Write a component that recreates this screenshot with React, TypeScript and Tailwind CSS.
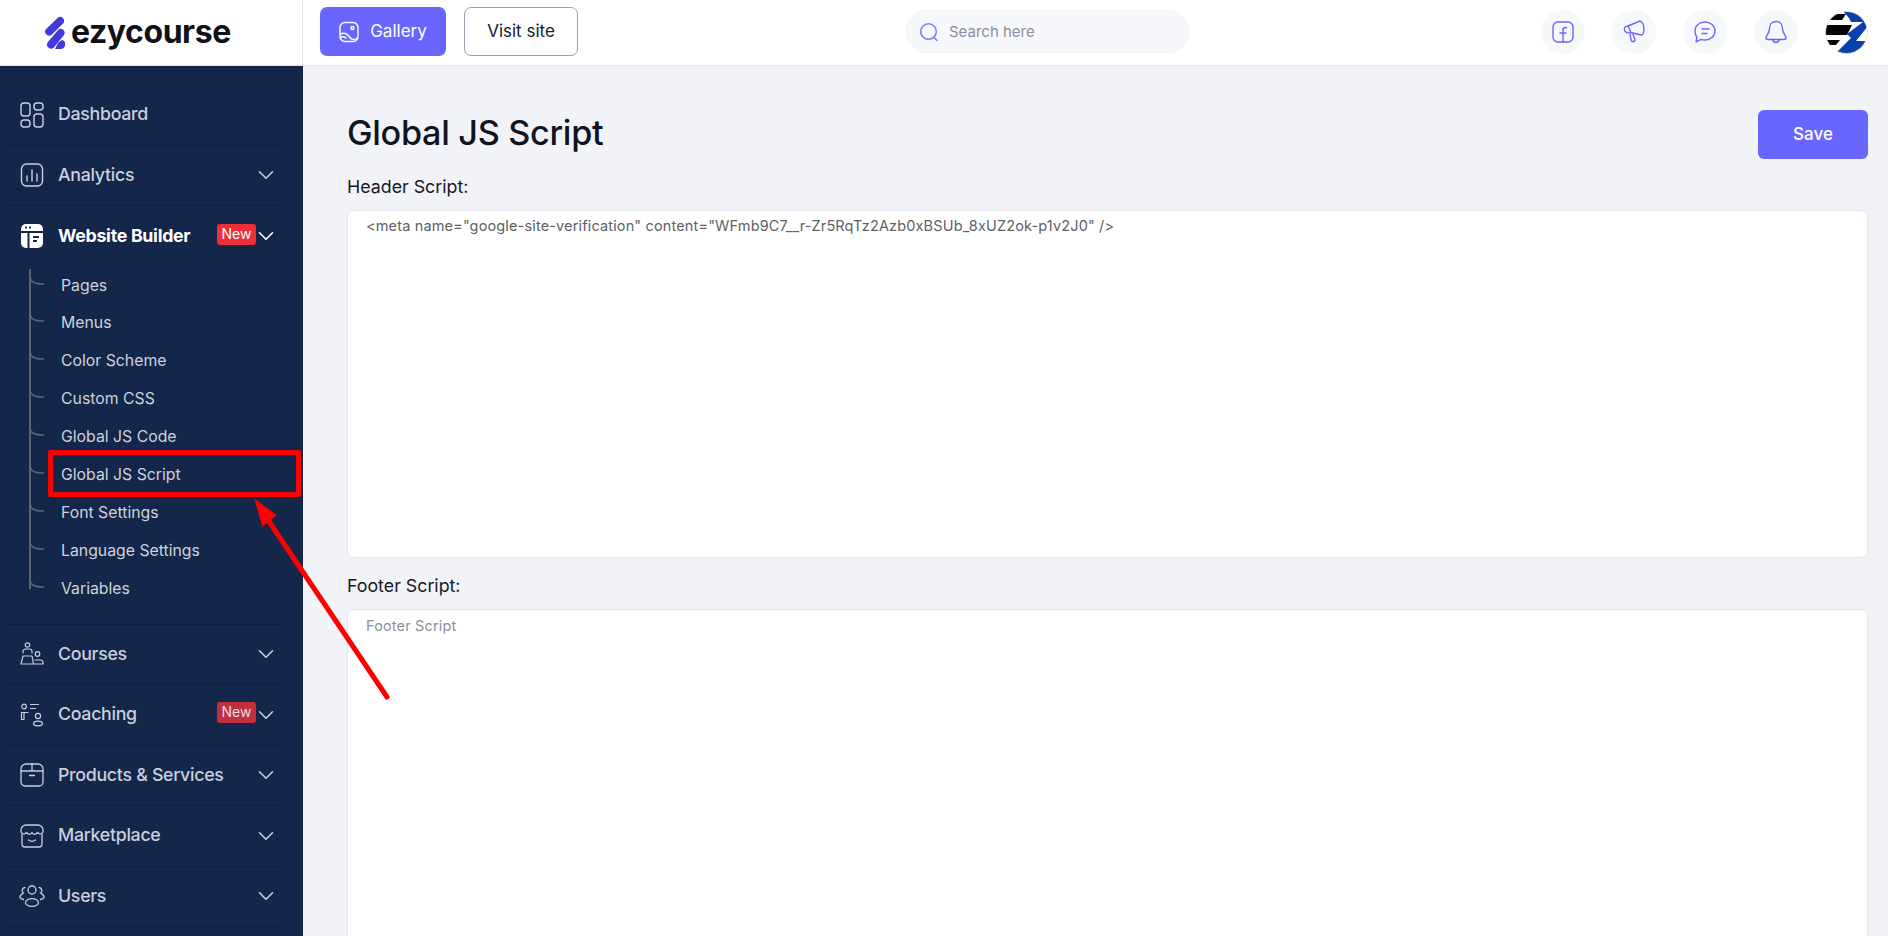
import React from 'react';
import { ChevronDown } from 'lucide-react';

const font = "font-['Inter','Liberation_Sans',sans-serif]";

// sidebar icons, hand drawn because the packages have no close match
const IconDashboard = () => (
  <svg width="24" height="26" viewBox="0 0 24 26" fill="none" stroke="currentColor" strokeWidth="1.4">
    <rect x="1" y="1" width="9" height="13" rx="3" />
    <rect x="14" y="1" width="9" height="7" rx="3" />
    <rect x="1" y="18" width="9" height="7" rx="3" />
    <rect x="14" y="12" width="9" height="13" rx="3" />
  </svg>
);
const IconAnalytics = () => (
  <svg width="24" height="26" viewBox="0 0 24 26" fill="none" stroke="currentColor" strokeWidth="1.4" strokeLinecap="round">
    <rect x="1.5" y="2" width="21" height="22" rx="5" />
    <path d="M7 14v5M12 8v11M17 12v7" />
  </svg>
);
const IconBuilder = () => (
  <svg width="24" height="26" viewBox="0 0 24 26" fill="#fff">
    <path d="M6 1h12a5 5 0 0 1 5 5v2H1V6a5 5 0 0 1 5-5z" />
    <path d="M1 10h6.5v15H6a5 5 0 0 1-5-5z" />
    <path d="M9.5 10H23v10a5 5 0 0 1-5 5H9.5z" />
    <circle cx="6" cy="4.6" r="1.1" fill="#142649" />
    <circle cx="10" cy="4.6" r="1.1" fill="#142649" />
    <path d="M13 14h6M13 18h4" stroke="#142649" strokeWidth="2" />
  </svg>
);
const IconCourses = () => (
  <svg width="24" height="24" viewBox="0 0 24 24" fill="none" stroke="currentColor" strokeWidth="1.2" strokeLinecap="round" strokeLinejoin="round">
    <circle cx="7.5" cy="3" r="2.2" />
    <path d="M3 11V9.5A2.5 2.5 0 0 1 5.5 7h4A2.5 2.5 0 0 1 12 9.5V11" />
    <circle cx="17.5" cy="12" r="2.3" />
    <path d="M3 14h9l1.5 8H1z" />
    <path d="M15 18h5.5a2.5 2.5 0 0 1 2.5 2.5V22h-9" />
  </svg>
);
const IconCoaching = () => (
  <svg width="24" height="24" viewBox="0 0 24 24" fill="none" stroke="currentColor" strokeWidth="1.2" strokeLinecap="round">
    <circle cx="4" cy="3.5" r="2.3" />
    <path d="M10.5 1.5h8M10.5 5.5h5" />
    <path d="M8 9.5H1.5v7H4M4 9.5v7" />
    <circle cx="18" cy="13" r="2.6" />
    <ellipse cx="18" cy="20.5" rx="4.5" ry="2.3" />
  </svg>
);
const IconBox = () => (
  <svg width="24" height="24" viewBox="0 0 24 24" fill="none" stroke="currentColor" strokeWidth="1.3" strokeLinecap="round">
    <path d="M6 1h12a5 5 0 0 1 5 5v13a4 4 0 0 1-4 4H5a4 4 0 0 1-4-4V6a5 5 0 0 1 5-5z" />
    <path d="M1 8h22M12 1v7M9.5 12.5h5" />
  </svg>
);
const IconStore = () => (
  <svg width="24" height="24" viewBox="0 0 24 24" fill="none" stroke="currentColor" strokeWidth="1.3" strokeLinecap="round" strokeLinejoin="round">
    <path d="M6 1h12a5 5 0 0 1 5 5v2c-2 3-4 2-5.5.5-2 2.5-4 2.5-5.5 0-1.5 2.5-3.5 2.5-5.5 0C5 10 3 11 1 8V6a5 5 0 0 1 5-5z" />
    <path d="M2 10v10a3 3 0 0 0 3 3h14a3 3 0 0 0 3-3V10" />
    <path d="M8.5 16c2 1.5 5 1.5 7 0" />
  </svg>
);
const IconUsers = () => (
  <svg width="26" height="24" viewBox="0 0 26 24" fill="none" stroke="currentColor" strokeWidth="1.3" strokeLinecap="round">
    <circle cx="13" cy="6" r="4" />
    <ellipse cx="13" cy="18.5" rx="6.5" ry="3.8" />
    <path d="M6 3.5a3 3 0 0 0-1.5 5.5c-2 1-3.5 2.5-3.5 4 0 1 1.5 2 3.5 2.5" />
    <path d="M20 3.5a3 3 0 0 1 1.5 5.5c2 1 3.5 2.5 3.5 4 0 1-1.5 2-3.5 2.5" />
  </svg>
);

const Chevron = () => <ChevronDown size={26} strokeWidth={1.5} className="-ml-[3px]" />;

const NewBadge = ({ dim }: { dim?: boolean }) => (
  <span className={`w-[39px] h-[21px] -mt-[4px] rounded-[3px] text-[14px] leading-[20px] text-center ${dim ? 'bg-[#c2303f] text-[#e9dbe2]' : 'bg-[#ee2f37] text-white'}`}>New</span>
);

const NavRow = ({ icon, label, chevron = true, badge, active, noBorder }: { icon: React.ReactNode; label: string; chevron?: boolean; badge?: React.ReactNode; active?: boolean; noBorder?: boolean }) => (
  <div className={`ml-[7px] mr-[24px] h-[60.5px] flex items-center pl-[12px] ${noBorder ? '' : 'border-b border-[#0f1e3d]'} ${active ? 'text-white' : 'text-[#c9cede]'}`}>
    <span className="w-[26px] flex justify-center shrink-0">{icon}</span>
    <span className={`ml-[13px] text-[17.8px] tracking-[-0.3px] ${active ? 'font-bold' : 'font-medium'}`}>{label}</span>
    <span className="ml-auto flex items-center">
      {badge}
      {chevron && <Chevron />}
    </span>
  </div>
);

const subItems = ['Pages', 'Menus', 'Color Scheme', 'Custom CSS', 'Global JS Code', 'Global JS Script', 'Font Settings', 'Language Settings', 'Variables'];

const SubMenu = () => (
  <div className="relative mb-[16px]">
    <div className="absolute left-[29px] top-[2px] bottom-[19px] w-[2px] bg-[#5d6373]" />
    {subItems.map((item) => (
      <div key={item} className="relative h-[37.9px] flex items-center pl-[61px] text-[15.8px] text-[#cdd2dc]">
        <svg className="absolute left-[29px] top-[9px]" width="16" height="12" viewBox="0 0 16 12" fill="none" stroke="#5d6373" strokeWidth="1.6">
          <path d="M1 0c0 6 4 8 14 8" />
        </svg>
        {item}
      </div>
    ))}
  </div>
);

const Sidebar = () => (
  <aside className="w-[303px] shrink-0 bg-[#142649] pt-[19px] overflow-hidden">
    <NavRow icon={<IconDashboard />} label="Dashboard" chevron={false} />
    <NavRow icon={<IconAnalytics />} label="Analytics" />
    <NavRow icon={<IconBuilder />} label="Website Builder" active noBorder badge={<NewBadge />} />
    <SubMenu />
    <div className="ml-[7px] mr-[24px] border-t border-[#0f1e3d]" />
    <NavRow icon={<IconCourses />} label="Courses" />
    <NavRow icon={<IconCoaching />} label="Coaching" badge={<NewBadge dim />} />
    <NavRow icon={<IconBox />} label="Products & Services" />
    <NavRow icon={<IconStore />} label="Marketplace" />
    <NavRow icon={<IconUsers />} label="Users" />
  </aside>
);

const Logo = () => (
  <div className="w-[303px] shrink-0 h-full border-r border-[#e6e8ee] flex items-center pl-[44px]">
    <svg width="22" height="34" viewBox="0 0 22 34" fill="#4338dc">
      <path d="M14 1.5a4 4 0 0 1 5.5 5.5L8 18.5a4 4 0 0 1-5.8-5.5z" />
      <path d="M14.5 13.5a4 4 0 0 1 5.5 5.5L9.5 32a4.2 4.2 0 0 1-6-5.5z" />
      <path d="M14 27l3-2.5c2.5-1 5 1.5 4 5-.3 2-2 3.5-4 3.5h-6z" />
    </svg>
    <span className="ml-[5px] text-[32px] font-bold tracking-[-0.45px] leading-none text-[#111218] -mt-[2px]">ezycourse</span>
  </div>
);

const RoundIcon = ({ children }: { children: React.ReactNode }) => (
  <div className="w-[44px] h-[44px] rounded-full bg-[#f7f8fb] flex items-center justify-center text-[#6966ff]">{children}</div>
);

const Avatar = () => (
  <svg width="43" height="43" viewBox="0 0 43 43">
    <defs>
      <clipPath id="av"><circle cx="21.5" cy="21.5" r="21" /></clipPath>
    </defs>
    <g clipPath="url(#av)">
      <rect width="43" height="43" fill="#fff" />
      <path d="M0 3h21l-4 6H0zM0 14h27l-5 10H0zM0 29h15l-4 5H0z" fill="#050505" />
      <path d="M18 0h25v15L31 30h12v13H10l16-16-4-4 16-12H26l-2-4z" fill="#0a3fae" />
    </g>
    <circle cx="21.5" cy="21.5" r="21" fill="none" stroke="#dfe1e6" strokeWidth="0.8" />
  </svg>
);

const Header = () => (
  <header className="h-[66px] shrink-0 bg-white border-b border-[#e3e5ea] flex items-center">
    <Logo />
    <div className="flex items-center gap-[18px] pl-[17px] -mt-[2px]">
      <button className="w-[126px] h-[49px] rounded-[7px] bg-[#6966ff] text-white text-[17px] flex items-center justify-center gap-[11px]">
        <svg width="20" height="22" viewBox="0 0 20 22" fill="none" stroke="currentColor" strokeWidth="1.4" strokeLinecap="round">
          <rect x="1" y="1.5" width="18" height="19" rx="5" />
          <circle cx="13.5" cy="7" r="1.5" />
          <path d="M1.5 13c4-2 7 0 9 3s5 3.5 8 1" />
          <path d="M1.5 16.5c2-1 4-.8 5.5.5" />
        </svg>
        Gallery
      </button>
      <button className="w-[114px] h-[49px] rounded-[7px] border border-[#9aa1b5] text-[#15192a] text-[17px]">Visit site</button>
    </div>
    <div className="ml-[328px] w-[283px] h-[43px] -mt-[2px] rounded-full bg-[#f7f8fb] border border-[#eef0f4] flex items-center pl-[12px]">
      <svg width="20" height="20" viewBox="0 0 20 20" fill="none" stroke="#7c79fb" strokeWidth="1.6" strokeLinecap="round">
        <circle cx="9.5" cy="9.5" r="7.8" />
        <path d="M15 15.5l3 3" />
      </svg>
      <span className="ml-[10px] mt-[1px] text-[15px] text-[#8c8f9c]">Search here</span>
    </div>
    <div className="ml-auto pr-[20px] flex items-center gap-[27px] -mt-[1px]">
      <RoundIcon>
        <svg width="22" height="22" viewBox="0 0 22 22" fill="none" stroke="currentColor" strokeWidth="1.4" strokeLinecap="round">
          <rect x="1" y="1" width="20" height="20" rx="5" />
          <path d="M14.5 6.5h-1a2.5 2.5 0 0 0-2.5 2.5v12M8 12h6" />
        </svg>
      </RoundIcon>
      <RoundIcon>
        <svg width="22" height="24" viewBox="0 0 22 24" fill="none" stroke="currentColor" strokeWidth="1.4" strokeLinecap="round" strokeLinejoin="round">
          <path d="M5 6l12-5c2 0 4 4 4 8s-1 6-3 6L8 12.5z" />
          <path d="M5 6C2 6 1 8 1.5 10c.4 2 2 3 4.5 2.5" />
          <path d="M7 13l1 7c.5 2 3.5 2.5 4 0l-2-6" />
        </svg>
      </RoundIcon>
      <RoundIcon>
        <svg width="22" height="22" viewBox="0 0 22 22" fill="none" stroke="currentColor" strokeWidth="1.4" strokeLinecap="round" strokeLinejoin="round">
          <path d="M11 1c5.500 0 10 3.700 10 9s-4.500 9-10 9c-1.500 0-3-.2-4-.7L2 21l1-4.500C1.700 15 1 12.500 1 10c0-5.300 4.500-9 10-9z" />
          <path d="M8 8h7M8 12.5h5" />
        </svg>
      </RoundIcon>
      <RoundIcon>
        <svg width="22" height="24" viewBox="0 0 22 24" fill="none" stroke="currentColor" strokeWidth="1.4" strokeLinecap="round" strokeLinejoin="round">
          <path d="M11 1.5c-4 0-6.5 3-6.5 7 0 5-3.5 7-3.5 9.5 0 1 1 1.5 2 1.5h16c1 0 2-.5 2-1.500 0-2.500-3.500-4.500-3.500-9.500 0-4-2.500-7-6.500-7z" />
          <path d="M7.5 19.5c.5 2 2 3 3.5 3s3-1 3.5-3" />
        </svg>
      </RoundIcon>
      <Avatar />
    </div>
  </header>
);

const Content = () => (
  <main className="flex-1 min-w-0 bg-[#f2f3f8] pl-[44px] pr-[20px] pt-[44px] overflow-hidden">
    <div className="flex items-center justify-between">
      <h1 className="-mt-[3px] text-[34.2px] font-medium tracking-[-0.3px] text-[#10141f]">Global JS Script</h1>
      <button className="w-[110px] h-[49px] rounded-[6px] bg-[#6966ff] text-white text-[17px] font-medium">Save</button>
    </div>
    <label className="block mt-[16px] h-[24px] leading-[24px] text-[17.8px] text-[#16191f]">Header Script:</label>
    <textarea
      readOnly
      className="block mt-[11px] w-full h-[348px] resize-none rounded-[6px] border border-[#e4e6ea] bg-white px-[18px] py-[4px] text-[14.5px] tracking-[0.15px] text-[#5c5f66] outline-none"
      defaultValue={'<meta name="google-site-verification" content="WFmb9C7__r-Zr5RqTz2Azb0xBSUb_8xUZ2ok-p1v2J0" />'}
    />
    <label className="block mt-[16px] h-[24px] leading-[24px] text-[17.8px] text-[#16191f]">Footer Script:</label>
    <textarea
      readOnly
      placeholder="Footer Script"
      className="block mt-[11px] w-full h-[348px] resize-none rounded-[6px] border border-[#e4e6ea] bg-white px-[18px] py-[5px] text-[14.5px] tracking-[0.15px] text-[#5c5f66] placeholder:text-[#8c8f96] outline-none"
    />
  </main>
);

// red annotation drawn over the screenshot
const Annotation = () => (
  <>
    <div className="absolute left-[48px] top-[450px] w-[253px] h-[47px] border-[5px] border-[#ff0000] rounded-[2px] pointer-events-none" />
    <svg className="absolute left-0 top-0 pointer-events-none" width="500" height="720" viewBox="0 0 500 720" fill="none">
      <path d="M387 697L266 517" stroke="#ff0000" strokeWidth="5" strokeLinecap="round" />
      <path d="M256 501L275 515L263 525z" fill="#ff0000" stroke="#ff0000" strokeWidth="2" />
    </svg>
  </>
);

export default function App() {
  return (
    <div className={`relative h-screen flex flex-col overflow-hidden ${font}`}>
      <Header />
      <div className="flex-1 min-h-0 flex">
        <Sidebar />
        <Content />
      </div>
      <Annotation />
    </div>
  );
}
